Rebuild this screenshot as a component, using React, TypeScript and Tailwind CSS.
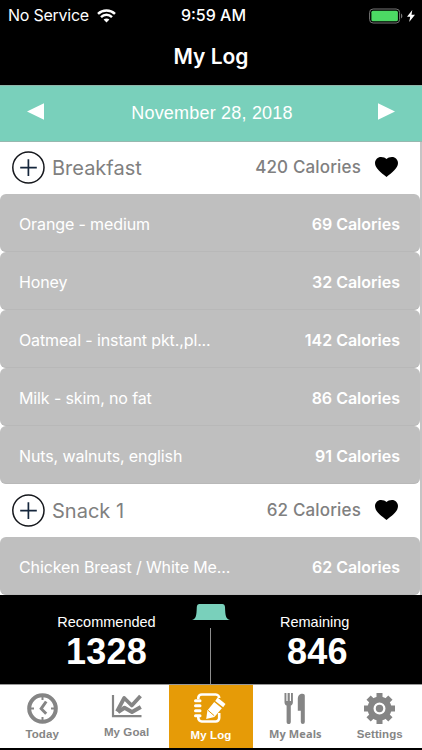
import React from 'react';

interface FoodItem {
  name: string;
  calories: number;
}

interface Meal {
  name: string;
  calories: number;
  items: FoodItem[];
}

const meals: Meal[] = [
  {
    name: 'Breakfast',
    calories: 420,
    items: [
      { name: 'Orange - medium', calories: 69 },
      { name: 'Honey', calories: 32 },
      { name: 'Oatmeal - instant pkt.,pl...', calories: 142 },
      { name: 'Milk - skim, no fat', calories: 86 },
      { name: 'Nuts, walnuts, english', calories: 91 },
    ],
  },
  {
    name: 'Snack 1',
    calories: 62,
    items: [{ name: 'Chicken Breast / White Me...', calories: 62 }],
  },
];

const StatusBar: React.FC = () => (
  <div className="grid h-[29px] grid-cols-3 items-center pl-2 pr-[7px] text-[16px] leading-[29px]">
    <div className="flex items-center gap-2 whitespace-nowrap">
      <span className="tracking-[-0.25px]">No Service</span>
      <svg width="19" height="14" viewBox="0 0 19 14" fill="none" stroke="white" strokeWidth="2.5">
        <path d="M1 4.8C5.8.3 13.2.3 18 4.8" />
        <path d="M4 8.1c3.2-3 7.8-3 11 0" />
        <path d="M6.6 10.6c1.7-1.5 4.1-1.5 5.8 0L9.5 13.5z" fill="white" stroke="none" />
      </svg>
    </div>
    <span className="pl-1 text-center font-medium">9:59 AM</span>
    <div className="flex items-center justify-end gap-[4px]">
      <svg width="34" height="16" viewBox="0 0 34 16">
        <rect x=".6" y="1" width="30" height="14" rx="3.5" fill="none" stroke="#777" />
        <rect x="2.4" y="2.8" width="26.5" height="10.4" rx="1.5" fill="#4cd964" />
        <path d="M32 5.5c1.8.8 1.8 4.2 0 5z" fill="#777" />
      </svg>
      <svg width="8" height="12" viewBox="0 0 8 12" fill="white">
        <path d="M5.3 0 0 6.8h3.2L2.2 12 8 4.8H4.5z" />
      </svg>
    </div>
  </div>
);

const MealHeader: React.FC<{ meal: Meal }> = ({ meal }) => (
  <div className="flex h-[53px] items-center pl-3 pr-[22px] text-[#808080]">
    <svg width="33" height="33" viewBox="0 0 33 33" fill="none">
      <circle cx="16.4" cy="16.5" r="15.6" stroke="#15171c" strokeWidth="1.5" />
      <path d="M16.4 8.3v16.6M8.2 16.6h16.6" stroke="#15263c" strokeWidth="1.7" />
    </svg>
    <span className="ml-[7px] flex-1 text-[20px]">{meal.name}</span>
    <span className="text-[17px] font-medium tracking-[0.15px]">{meal.calories} Calories</span>
    <svg className="-mt-[2px] ml-[14px]" width="23" height="20" viewBox="0 0 23 20" fill="black">
      <path d="M11.5 20C6 15.6 0 11.5 0 6.1 0 2.6 2.7 0 6 0c2.3 0 4.4.8 5.5 2C12.6.8 14.7 0 17 0c3.3 0 6 2.6 6 6.1 0 5.4-6 9.5-11.5 13.9z" />
    </svg>
  </div>
);

const FoodRow: React.FC<{ item: FoodItem }> = ({ item }) => (
  <div className="flex h-[58px] items-center justify-between rounded-[6px] border-b border-[#b8b8b8] bg-[#bfbfbf] pl-[19px] pr-5 pt-[2px] text-[16px] text-white">
    <span className="tracking-[-0.12px]">{item.name}</span>
    <span className="font-semibold">{item.calories} Calories</span>
  </div>
);

const Total: React.FC<{ label: string; value: number }> = ({ label, value }) => (
  <div className="flex flex-col items-center">
    <span className="text-[14.5px] leading-[18px]">{label}</span>
    <span className="text-[36px] font-bold leading-[42px] tracking-[0.2px]">{value}</span>
  </div>
);

const TodayIcon: React.FC = () => (
  <svg width="31" height="31" viewBox="0 0 31 31" fill="none" stroke="#858585">
    <circle cx="15.5" cy="15.5" r="13.3" strokeWidth="4" />
    <path d="M15.5 3v4M15.5 24v4M3 15.5h4M24 15.5h4" strokeWidth="2" />
    <path d="m19.2 8.5-5 7.2 5 5" strokeWidth="3" />
  </svg>
);

const GoalIcon: React.FC = () => (
  <svg width="32" height="24" viewBox="0 0 32 24" fill="none" stroke="#858585">
    <path d="M2 1v21.2h28.5" strokeWidth="2.2" />
    <path d="M6 17.5 13.2 4l7.6 7.5L29.5 2" strokeWidth="3.8" strokeLinejoin="round" />
    <path d="m7 18 6.5-4.2 7.5 4.2 8.8-5" strokeWidth="4" strokeLinejoin="round" />
  </svg>
);

const LogIcon: React.FC = () => (
  <svg width="33" height="31" viewBox="0 0 33 31" fill="none" stroke="white">
    <path d="M4.3 6V5a3.5 3.5 0 0 1 3.5-3.5h14A3.5 3.5 0 0 1 25.2 5M25.2 20v5a3.5 3.5 0 0 1-3.5 3.5h-14A3.5 3.5 0 0 1 4.3 25v-1" strokeWidth="2.6" />
    <path d="M1.5 7.7h4.5M1.5 12.7h4.5M1.5 17.7h4.5M1.5 22.7h4.5" strokeWidth="3" strokeLinecap="round" />
    <path d="m23.5 4.5 8 6.4-2.3 3.3-8-6.3z" fill="white" stroke="none" />
    <path d="m20.2 9 7.7 6.2-7.5 8.8-8.2 2 1.2-8.5z" fill="white" stroke="none" />
    <path d="m14 17.3 6.2 5.4" stroke="#e69b07" strokeWidth="1" />
  </svg>
);

const MealsIcon: React.FC = () => (
  <svg width="22" height="31" viewBox="0 0 22 31" fill="#858585">
    <path d="M.5 0h1.9v8h1.2V0h2.2v8H7V0h1.9v9.3c0 2-1.1 2.9-2.1 3.3V29a2.1 2.1 0 0 1-4.2 0V12.6C1.6 12.2.5 11.3.5 9.3z" />
    <path d="M13.8 6.3C13.8 2.5 15.8.8 18.5.8c1.5 0 2.3.7 2.3 2V29a2 2 0 0 1-4 0V17.8h-3z" />
  </svg>
);

const SettingsIcon: React.FC = () => (
  <svg width="31" height="31" viewBox="0 0 31 31" stroke="#858585" fill="none">
    <circle cx="15.5" cy="15.5" r="9" strokeWidth="6" />
    <path d="M15.5 0v5M15.5 26v5M0 15.5h5M26 15.5h5M4.6 4.6l3.6 3.6M22.8 22.8l3.6 3.6M4.6 26.4l3.6-3.6M22.8 8.2l3.6-3.6" strokeWidth="6" />
    <circle cx="15.5" cy="15.5" r="3.7" fill="#858585" stroke="none" />
  </svg>
);

const App: React.FC = () => {
  return (
    <div className="flex h-[750px] w-[422px] flex-col overflow-hidden bg-black font-['Inter',sans-serif] text-white">
      <header className="h-[85px] shrink-0 pt-px">
        <StatusBar />
        <h1 className="mt-[9px] text-center text-[21px] font-semibold leading-[36px]">My Log</h1>
      </header>

      {/* Date picker */}
      <div className="flex h-[57px] shrink-0 items-center justify-between border-y border-b-[#97b8af] border-t-[#8fb5aa] bg-[#79d0bb] px-[27px] font-['Liberation_Sans',sans-serif]">
        <svg width="17" height="17" viewBox="0 0 17 17" fill="white" className="-mt-[5px]">
          <path d="M17 .3v16.4L0 8.5z" />
        </svg>
        <span className="pl-[2px] text-[18px] tracking-[0.2px]">November 28, 2018</span>
        <svg width="17" height="17" viewBox="0 0 17 17" fill="white" className="-mt-[5px]">
          <path d="M0 .3v16.4l17-8.2z" />
        </svg>
      </div>

      {/* Meal log */}
      <main className="h-[453px] shrink-0 border-r-2 border-r-[#c4c4c4] bg-white">
        {meals.map((meal) => (
          <section key={meal.name} className="first:-mt-px">
            <MealHeader meal={meal} />
            {meal.items.map((item) => (
              <FoodRow key={item.name} item={item} />
            ))}
          </section>
        ))}
      </main>

      {/* Calorie totals */}
      <div className="grid h-[89px] shrink-0 grid-cols-[192px_38px_192px] font-['Liberation_Sans',sans-serif]">
        <div className="pl-[21px] pt-[18px]">
          <Total label="Recommended" value={1328} />
        </div>
        <div className="flex flex-col items-center pt-[9px]">
          <svg width="38" height="16" viewBox="0 0 38 16" fill="#79d0bb">
            <path d="M0 16c4-1 4.5-4 4.8-13C5 1 5.8 0 7.5 0h22.8c1.7 0 2.5 1 2.7 3 .3 9 .8 12 5 13z" />
          </svg>
          <div className="mr-[1px] mt-[8px] w-px flex-1 bg-[#8e8e8e]" />
        </div>
        <div className="flex flex-col items-start pl-[50px] pt-[18px]">
          <span className="text-[14.5px] leading-[18px]">Remaining</span>
          <span className="pl-[7px] text-[36px] font-bold leading-[42px] tracking-[0.2px]">846</span>
        </div>
      </div>

      {/* Tab bar */}
      <nav className="grid h-[66px] shrink-0 grid-cols-5 border-b-2 border-t border-b-black border-t-[#999] bg-white font-['Liberation_Sans',sans-serif] text-[11.5px] font-bold tracking-[0.1px] text-[#858585]">
        <div className="flex flex-col items-center pt-[8px]">
          <TodayIcon />
          <span className="mt-[2px] leading-[16px]">Today</span>
        </div>
        <div className="flex flex-col items-center pt-[9px]">
          <GoalIcon />
          <span className="mt-[6px] leading-[16px]">My Goal</span>
        </div>
        <div className="flex flex-col items-center bg-[#e69b07] pt-[8px] text-white">
          <LogIcon />
          <span className="mt-[3px] leading-[16px]">My Log</span>
        </div>
        <div className="flex flex-col items-center pt-[8px]">
          <MealsIcon />
          <span className="mt-[2px] font-['Open_Sans',sans-serif] text-[11px] leading-[16px]">My Meals</span>
        </div>
        <div className="flex flex-col items-center pt-[8px]">
          <SettingsIcon />
          <span className="mt-[2px] leading-[16px]">Settings</span>
        </div>
      </nav>
    </div>
  );
};

export default App;
